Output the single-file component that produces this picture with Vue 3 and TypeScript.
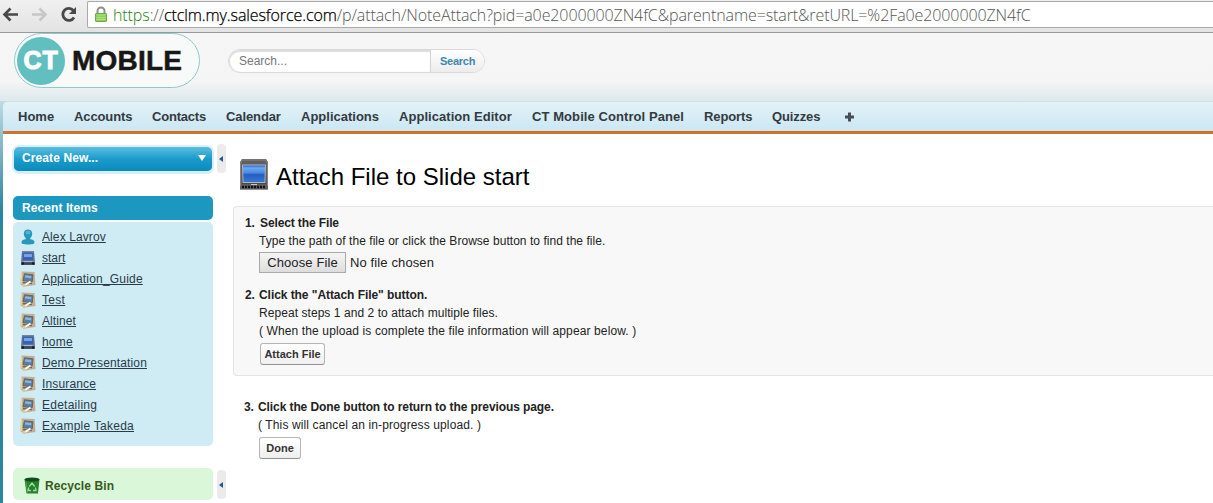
<script setup lang="ts">
interface Tab { label: string; width: number; tracking?: number }
interface RecentItem { label: string; icon: 'user' | 'slide' | 'app'; tracking: number }

const tabs: Tab[] = [
  { label: 'Home', width: 56 },
  { label: 'Accounts', width: 78, tracking: -0.12 },
  { label: 'Contacts', width: 74, tracking: -0.2 },
  { label: 'Calendar', width: 75, tracking: -0.1 },
  { label: 'Applications', width: 98 },
  { label: 'Application Editor', width: 133, tracking: 0.05 },
  { label: 'CT Mobile Control Panel', width: 172, tracking: 0.08 },
  { label: 'Reports', width: 68, tracking: -0.12 },
  { label: 'Quizzes', width: 73, tracking: -0.12 },
]

const recent: RecentItem[] = [
  { label: 'Alex Lavrov', icon: 'user', tracking: 0.1 },
  { label: 'start', icon: 'slide', tracking: 0 },
  { label: 'Application_Guide', icon: 'app', tracking: 0.2 },
  { label: 'Test', icon: 'app', tracking: 0.3 },
  { label: 'Altinet', icon: 'app', tracking: 0.1 },
  { label: 'home', icon: 'slide', tracking: 0.2 },
  { label: 'Demo Presentation', icon: 'app', tracking: 0.13 },
  { label: 'Insurance', icon: 'app', tracking: 0.15 },
  { label: 'Edetailing', icon: 'app', tracking: 0.25 },
  { label: 'Example Takeda', icon: 'app', tracking: 0.25 },
]
</script>

<template>
  <div class="window">
    <div class="toolbar">
      <svg class="nav-icons" width="87" height="32" viewBox="0 0 87 32">
        <g fill="none" stroke-width="2.6">
          <path d="M18 14.5H5M10.5 8.5l-6 6 6 6" stroke="#484848" />
          <path d="M32 14.5h13M39.500 8.500l6 6-6 6" stroke="#c6c6c6" />
          <path d="M73.400 10.500A6 6 0 1 0 74 17.500" stroke="#484848" stroke-width="2.800" />
        </g>
        <path d="M76 7v7h-7z" fill="#484848" />
      </svg>
      <div class="address">
        <svg class="lock" width="14" height="18" viewBox="0 0 14 18">
          <path d="M3.500 8V5.200a3.500 3.800 0 0 1 7 0V8" fill="none" stroke="#8b8f88" stroke-width="2" />
          <rect x="1.500" y="7.500" width="11" height="8" rx=".6" fill="#8ed057" stroke="#6fa84c" />
          <path d="M2.500 9h9M2.500 11.500h9M2.500 13.500h9" stroke="#b4e68a" stroke-width=".8" />
        </svg>
        <span class="url"><span class="scheme">https</span>://<span class="host">ctclm.my.salesforce.com</span>/p/attach/NoteAttach?pid=a0e2000000ZN4fC&amp;parentname=start&amp;retURL=%2Fa0e2000000ZN4fC</span>
      </div>
    </div>

    <header class="header">
      <div class="logo">
        <span class="disc">CT</span>
        <span class="brand">MOBILE</span>
      </div>
      <div class="search">
        <span class="search-input">Search...</span>
        <span class="search-button">Search</span>
      </div>
    </header>

    <div class="page">
      <nav class="tabs">
        <a v-for="tab in tabs" :key="tab.label" :style="{ width: tab.width + 'px', letterSpacing: (tab.tracking ?? 0) + 'px' }">{{ tab.label }}</a>
        <svg width="9" height="10" viewBox="0 0 9 10"><path d="M4.500 .5v9M0 5h9" stroke="#474e55" stroke-width="3" /></svg>
      </nav>

      <div class="body">
        <aside class="sidebar">
          <div class="create">
            <span>Create New...</span>
            <svg width="8" height="6" viewBox="0 0 8 6"><path d="M0 0h8L4 6z" fill="#fff" /></svg>
          </div>
          <h2 class="recent-title">Recent Items</h2>
          <ul class="recent">
            <li v-for="item in recent" :key="item.label">
              <svg v-if="item.icon === 'user'" width="16" height="16" viewBox="0 0 16 16">
                <path d="M8 .5c2.500 0 4.200 1.600 4.200 3.900 0 2-.8 3.700-1.900 4.600v1.300c2.500.3 4.200 1.300 4.200 3 0 1.700-1.700 2.200-6.500 2.200s-6.500-.5-6.500-2.200c0-1.700 1.700-2.700 4.200-3V9C4.600 8.100 3.800 6.400 3.800 4.400 3.800 2.100 5.500.5 8 .5z" fill="#2798b9" />
                <ellipse cx="8" cy="3.500" rx="2.600" ry="1.900" fill="#4bb3d0" />
              </svg>
              <svg v-else-if="item.icon === 'slide'" width="16" height="16" viewBox="0 0 16 16">
                <path d="M2 1h12l1 10v4H1v-4z" fill="#7d838e" />
                <rect x="2.500" y="2.500" width="11" height="8" fill="#3663b4" />
                <rect x="4" y="4" width="8" height="3" fill="#79a2e4" />
                <path d="M1.500 13.500h3M11.500 13.500h3" stroke="#15191f" stroke-width="2.500" />
                <path d="M4.500 13.500h7" stroke="#3b4554" stroke-width="2.500" />
                <path d="M3.500 11.500h9" stroke="#a9b9d0" />
              </svg>
              <svg v-else width="16" height="16" viewBox="0 0 16 16">
                <path d="M1.500 .5l13 .5 1 13-12 1.800L.3 13z" fill="#c4ae91" />
                <path d="M1.500 1L1 13" stroke="#e2d9a4" stroke-width="1.500" />
                <path d="M4.500 2.800l8.500 1-.8 7-9.200-1.300z" fill="#5480ab" stroke="#66645f" />
                <path d="M5.300 4.200l6 .7-.2 2.300-6.200-.8z" fill="#93b6d6" />
                <path d="M3 11.500l9 1.200" stroke="#77644f" stroke-width="1.300" />
                <path d="M5 14L10.500 10.500" stroke="#fff" stroke-width="2" />
                <path d="M2.500 14.500l3-.8" stroke="#e8cf8a" stroke-width="1.300" />
              </svg>
              <a :style="{ letterSpacing: item.tracking + 'px' }">{{ item.label }}</a>
            </li>
          </ul>
          <div class="bin">
            <svg width="16" height="18" viewBox="0 0 16 18">
              <path d="M.5 2h15L14 16.500H2.500z" fill="#26812f" />
              <ellipse cx="8" cy="2.500" rx="7.500" ry="2" fill="#0f4e1b" />
              <path d="M2 4.500l1.500 11" stroke="#4ca34e" />
              <path d="M5.300 9.500L8 6l2.700 3.500M11.500 10.500l.5 3H9M7 13.500H4l.7-3" fill="none" stroke="#a0dc99" stroke-width="1.300" />
            </svg>
            <span>Recycle Bin</span>
          </div>
        </aside>

        <div class="gutter">
          <span class="handle"><svg width="4" height="6" viewBox="0 0 4 6"><path d="M4 0v6L0 3z" fill="#275889" /></svg></span>
          <span class="handle"><svg width="4" height="6" viewBox="0 0 4 6"><path d="M4 0v6L0 3z" fill="#275889" /></svg></span>
        </div>

        <main class="content">
          <div class="title">
            <svg width="30" height="32" viewBox="0 0 30 32">
              <defs>
                <linearGradient id="screen" x1="0" y1="0" x2="0" y2="1">
                  <stop offset="0" stop-color="#2b67c2" /><stop offset=".15" stop-color="#6aaaf0" />
                  <stop offset=".45" stop-color="#4a88dc" /><stop offset=".55" stop-color="#245fc1" />
                  <stop offset="1" stop-color="#3a76d4" />
                </linearGradient>
              </defs>
              <path d="M3 0h24l2 3v28H1V3z" fill="#625f61" />
              <path d="M1.500 27V4L3.500 1h23l2 3v23" fill="none" stroke="#898588" />
              <path d="M3 5.500h24l-.7 18.500H3.700z" fill="#aeb7c8" />
              <path d="M4 6.500h22l-.5 16.500h-21z" fill="url(#screen)" />
              <path d="M3 24.500h24" stroke="#4b4949" />
              <path d="M3 28h24" stroke="#111" stroke-width="2.500" stroke-dasharray="2 1" />
              <path d="M12 25.500h6" stroke="#c7ccd2" />
              <path d="M1 30.500h28" stroke="#939397" />
            </svg>
            <h1>Attach File to Slide start</h1>
          </div>

          <section class="panel">
            <div class="step first">
              <h3 class="select"><b>1.</b>Select the File</h3>
              <p class="browse">Type the path of the file or click the Browse button to find the file.</p>
              <div class="picker"><button class="choose">Choose File</button><span>No file chosen</span></div>
            </div>
            <div class="step second">
              <h3 class="click"><b>2.</b>Click the "Attach File" button.</h3>
              <p class="repeat">Repeat steps 1 and 2 to attach multiple files.</p>
              <p class="upload">( When the upload is complete the file information will appear below. )</p>
              <button class="btn attach">Attach File</button>
            </div>
          </section>

          <section class="step third">
            <h3 class="return"><b>3.</b>Click the Done button to return to the previous page.</h3>
            <p class="cancel">( This will cancel an in-progress upload. )</p>
            <button class="btn done">Done</button>
          </section>
        </main>
      </div>
    </div>
  </div>
</template>

<style>
body { margin: 0; overflow: hidden; }
</style>

<style scoped>
.window { width: 1213px; height: 503px; overflow: hidden; background: #f5f5f5; font: 12px/18px "Liberation Sans", Arial, sans-serif; color: #222; display: flex; flex-direction: column; }
.window * { box-sizing: border-box; }
h1, h2, h3, p, ul { margin: 0; padding: 0; }

.toolbar { height: 33px; flex: none; display: flex; background: linear-gradient(#f0f0f0, #e3e3e3); border-bottom: 1px solid #999; }
.nav-icons { flex: none; }
.address { flex: 1; height: 27px; margin-top: 1px; background: #fff; border: 1px solid #a9a9a9; border-right: 0; border-radius: 2px 0 0 2px; display: flex; align-items: center; padding-left: 6px; }
.lock { flex: none; margin-right: 5px; }
.url { font: 300 16px/24px "Open Sans", "Noto Sans", sans-serif; letter-spacing: -.1px; color: #555; white-space: nowrap; }
.scheme { color: #26801a; }
.host { color: #000; -webkit-text-stroke: .25px #000; }

.header { height: 68px; flex: none; display: flex; padding-left: 14px; background: linear-gradient(#f6f6f6 0, #f5f5f5 48px, #dce9ed 68px); }
.logo { width: 186px; height: 55px; border: 1px solid #8fc9cb; border-radius: 28px; display: flex; align-items: center; padding-left: 2px; background: #f8f9f9; }
.disc { width: 48px; height: 48px; border-radius: 50%; background: #61bfc0; color: #fff; font: bold 25px/46px "Liberation Sans", Arial, sans-serif; text-align: center; letter-spacing: .8px; -webkit-text-stroke: 1px #fff; }
.brand { margin-left: 7px; font: bold 28px/48px "Liberation Sans", Arial, sans-serif; letter-spacing: .2px; color: #171717; -webkit-text-stroke: .5px #171717; }
.search { display: flex; width: 257px; height: 24px; margin: 16px 0 0 28px; border: 1px solid #d9d9d9; border-radius: 12px; overflow: hidden; background: #fff; }
.search-input { width: 201px; padding-left: 10px; line-height: 22px; color: #777; box-shadow: inset 0 2px 1px #ddd, inset 1px 0 1px #ddd; border-radius: 12px 0 0 12px; }
.search-button { flex: 1; border-left: 1px solid #d4d4d4; background: linear-gradient(#fff, #ececec); color: #3c88ae; font-weight: bold; font-size: 11px; line-height: 22px; padding-left: 9px; letter-spacing: -.25px; }

.page { flex: 1; padding-left: 3px; background: linear-gradient(#bfdbe3, #2b85a1 110px); }
.tabs { height: 33px; display: flex; align-items: center; padding-left: 15px; background: linear-gradient(#e4f2f8, #cbe7f3); border-top: 1px solid #d2e1e5; border-bottom: 3px solid #ca7230; border-radius: 5px 0 0 0; }
.tabs a { font-size: 13px; font-weight: bold; color: #333a40; white-space: nowrap; flex: none; }
.body { height: 369px; background: #fff; display: flex; }

.sidebar { width: 211px; padding: 11px 0 0 9px; }
.create { width: 202px; height: 29px; margin-bottom: 22px; display: flex; align-items: center; justify-content: space-between; padding: 0 6px 2px 8px; border: 2px solid #d9eff7; border-bottom-width: 3px; border-radius: 7px; background: linear-gradient(#5abfe0, #1b9bcb 50%, #0b8bbd); color: #fff; font-weight: bold; }
.create span { letter-spacing: .1px; }
.recent-title { width: 200px; height: 24px; margin: 0 0 2px 1px; padding-left: 9px; border-radius: 5px; background: #1c97bf; color: #fff; font-size: 12px; line-height: 24px; letter-spacing: .08px; }
.recent { width: 200px; height: 224px; margin-left: 1px; padding: 4px 0 0 7px; list-style: none; border-radius: 5px; background: #cfecf5; }
.recent li { height: 21px; display: flex; align-items: center; }
.recent svg { margin-top: 1px; }
.recent a { margin-left: 6px; color: #293a48; text-decoration: underline; text-underline-offset: 1px; }
.bin { width: 200px; height: 32px; margin: 22px 0 0 1px; padding: 3px 0 0 11px; display: flex; align-items: center; border-radius: 5px; background: #daf7d9; color: #38591c; font-weight: bold; }
.bin span { margin-left: 5px; letter-spacing: .1px; }

.gutter { width: 19px; padding: 10px 0 0 3px; }
.handle { display: flex; width: 9px; height: 29px; align-items: center; justify-content: center; background: #ebebeb; border-radius: 4px; }
.handle svg { margin-right: 1px; }
.handle + .handle { margin-top: 297px; }

.content { flex: 1; }
.title { height: 72px; padding: 25px 0 0 6px; display: flex; }
.title h1 { margin-left: 7px; font-size: 24px; line-height: 36px; font-weight: normal; color: #000; }
.panel { height: 170px; border: 1px solid #e5e5e5; border-right: 0; border-radius: 4px 0 0 4px; background: #f8f8f8; }
.step { padding-left: 25px; }
.first { padding-top: 7px; height: 79px; }
.third { padding: 22px 0 0 25px; }
h3 { margin-left: -14px; font-size: 12px; font-weight: bold; }
h3 b { display: inline-block; width: 14px; }
.select { letter-spacing: -.12px; }
.select b { width: 15px; }
.click { letter-spacing: -.06px; }
.return { letter-spacing: -.09px; }
.browse { letter-spacing: .04px; }
.repeat { letter-spacing: .06px; }
.upload { letter-spacing: .12px; }
.cancel { letter-spacing: .12px; }
.picker { display: flex; align-items: center; font-size: 13px; margin-top: 2px; }
.picker span { letter-spacing: .12px; }
.choose { width: 87px; height: 21px; margin-right: 4px; padding: 0; border: 1px solid #aaa; background: linear-gradient(#f5f5f5, #ddd); color: #222; font: 13px/18px "Liberation Sans", Arial, sans-serif; letter-spacing: .12px; }
.btn { display: block; height: 22px; padding: 0; border: 1px solid #b5b5b5; border-bottom-color: #929292; border-radius: 3px; background: linear-gradient(#fff, #efefef); color: #333; font: bold 11px/18px "Liberation Sans", Arial, sans-serif; }
.attach { width: 65px; margin: 3px 0 0 1px; }
.done { width: 42px; margin: 3px 0 0 1px; }
</style>
